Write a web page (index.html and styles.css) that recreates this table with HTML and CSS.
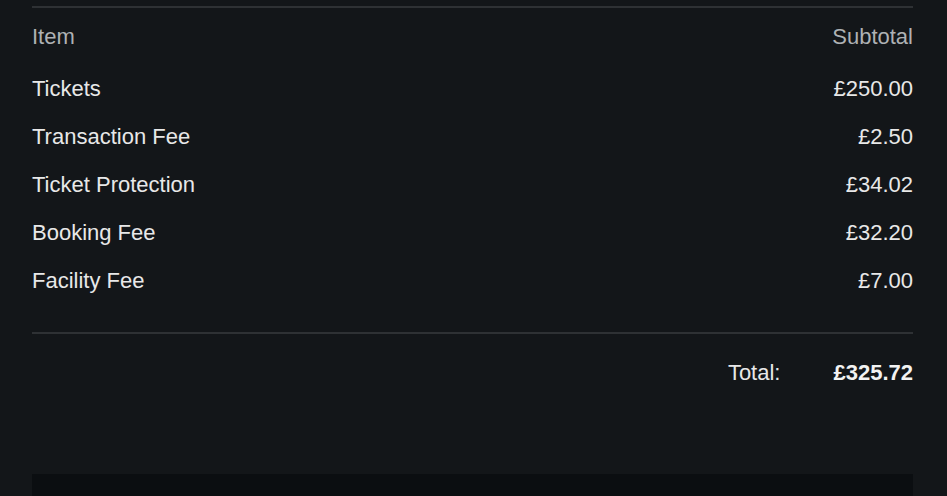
FILE: index.html
```html
<!DOCTYPE html>
<html>
<head>
<meta charset="utf-8">
<link rel="stylesheet" href="styles.css">
</head>
<body>
<div class="wrap">
  <div class="rule"></div>
  <div class="row head"><span>Item</span><span>Subtotal</span></div>
  <div class="items">
    <div class="row"><span>Tickets</span><span>£250.00</span></div>
    <div class="row"><span>Transaction Fee</span><span>£2.50</span></div>
    <div class="row"><span>Ticket Protection</span><span>£34.02</span></div>
    <div class="row"><span>Booking Fee</span><span>£32.20</span></div>
    <div class="row"><span>Facility Fee</span><span>£7.00</span></div>
  </div>
  <div class="rule rule2"></div>
  <div class="total"><span class="tl">Total:</span><span class="tv">£325.72</span></div>
  <div class="footer"></div>
</div>
</body>
</html>
```
FILE: styles.css
```css
html, body { margin: 0; padding: 0; }
body {
  background: #131619;
  font-family: "Liberation Sans", Arial, sans-serif;
  font-size: 22px;
  color: #e8e8e8;
  width: 947px;
  height: 496px;
  overflow: hidden;
}
.wrap { padding: 6px 34px 0 32px; }
.rule { height: 2px; background: #2e3134; }
.row {
  display: flex;
  justify-content: space-between;
  align-items: center;
  height: 48px;
  box-sizing: border-box;
  padding-top: 2px;
}
.head { margin-top: 4px; color: #aeb1b4; }
.items { margin-top: 4px; }
.rule2 { margin-top: 28px; }
.total {
  display: flex;
  justify-content: flex-end;
  align-items: center;
  height: 48px;
  box-sizing: border-box;
  padding-top: 2px;
  margin-top: 14px;
  gap: 53px;
}
.tv { font-weight: bold; color: #f2f2f2; }
.footer { margin-top: 78px; height: 40px; background: #0b0e11; }
```
